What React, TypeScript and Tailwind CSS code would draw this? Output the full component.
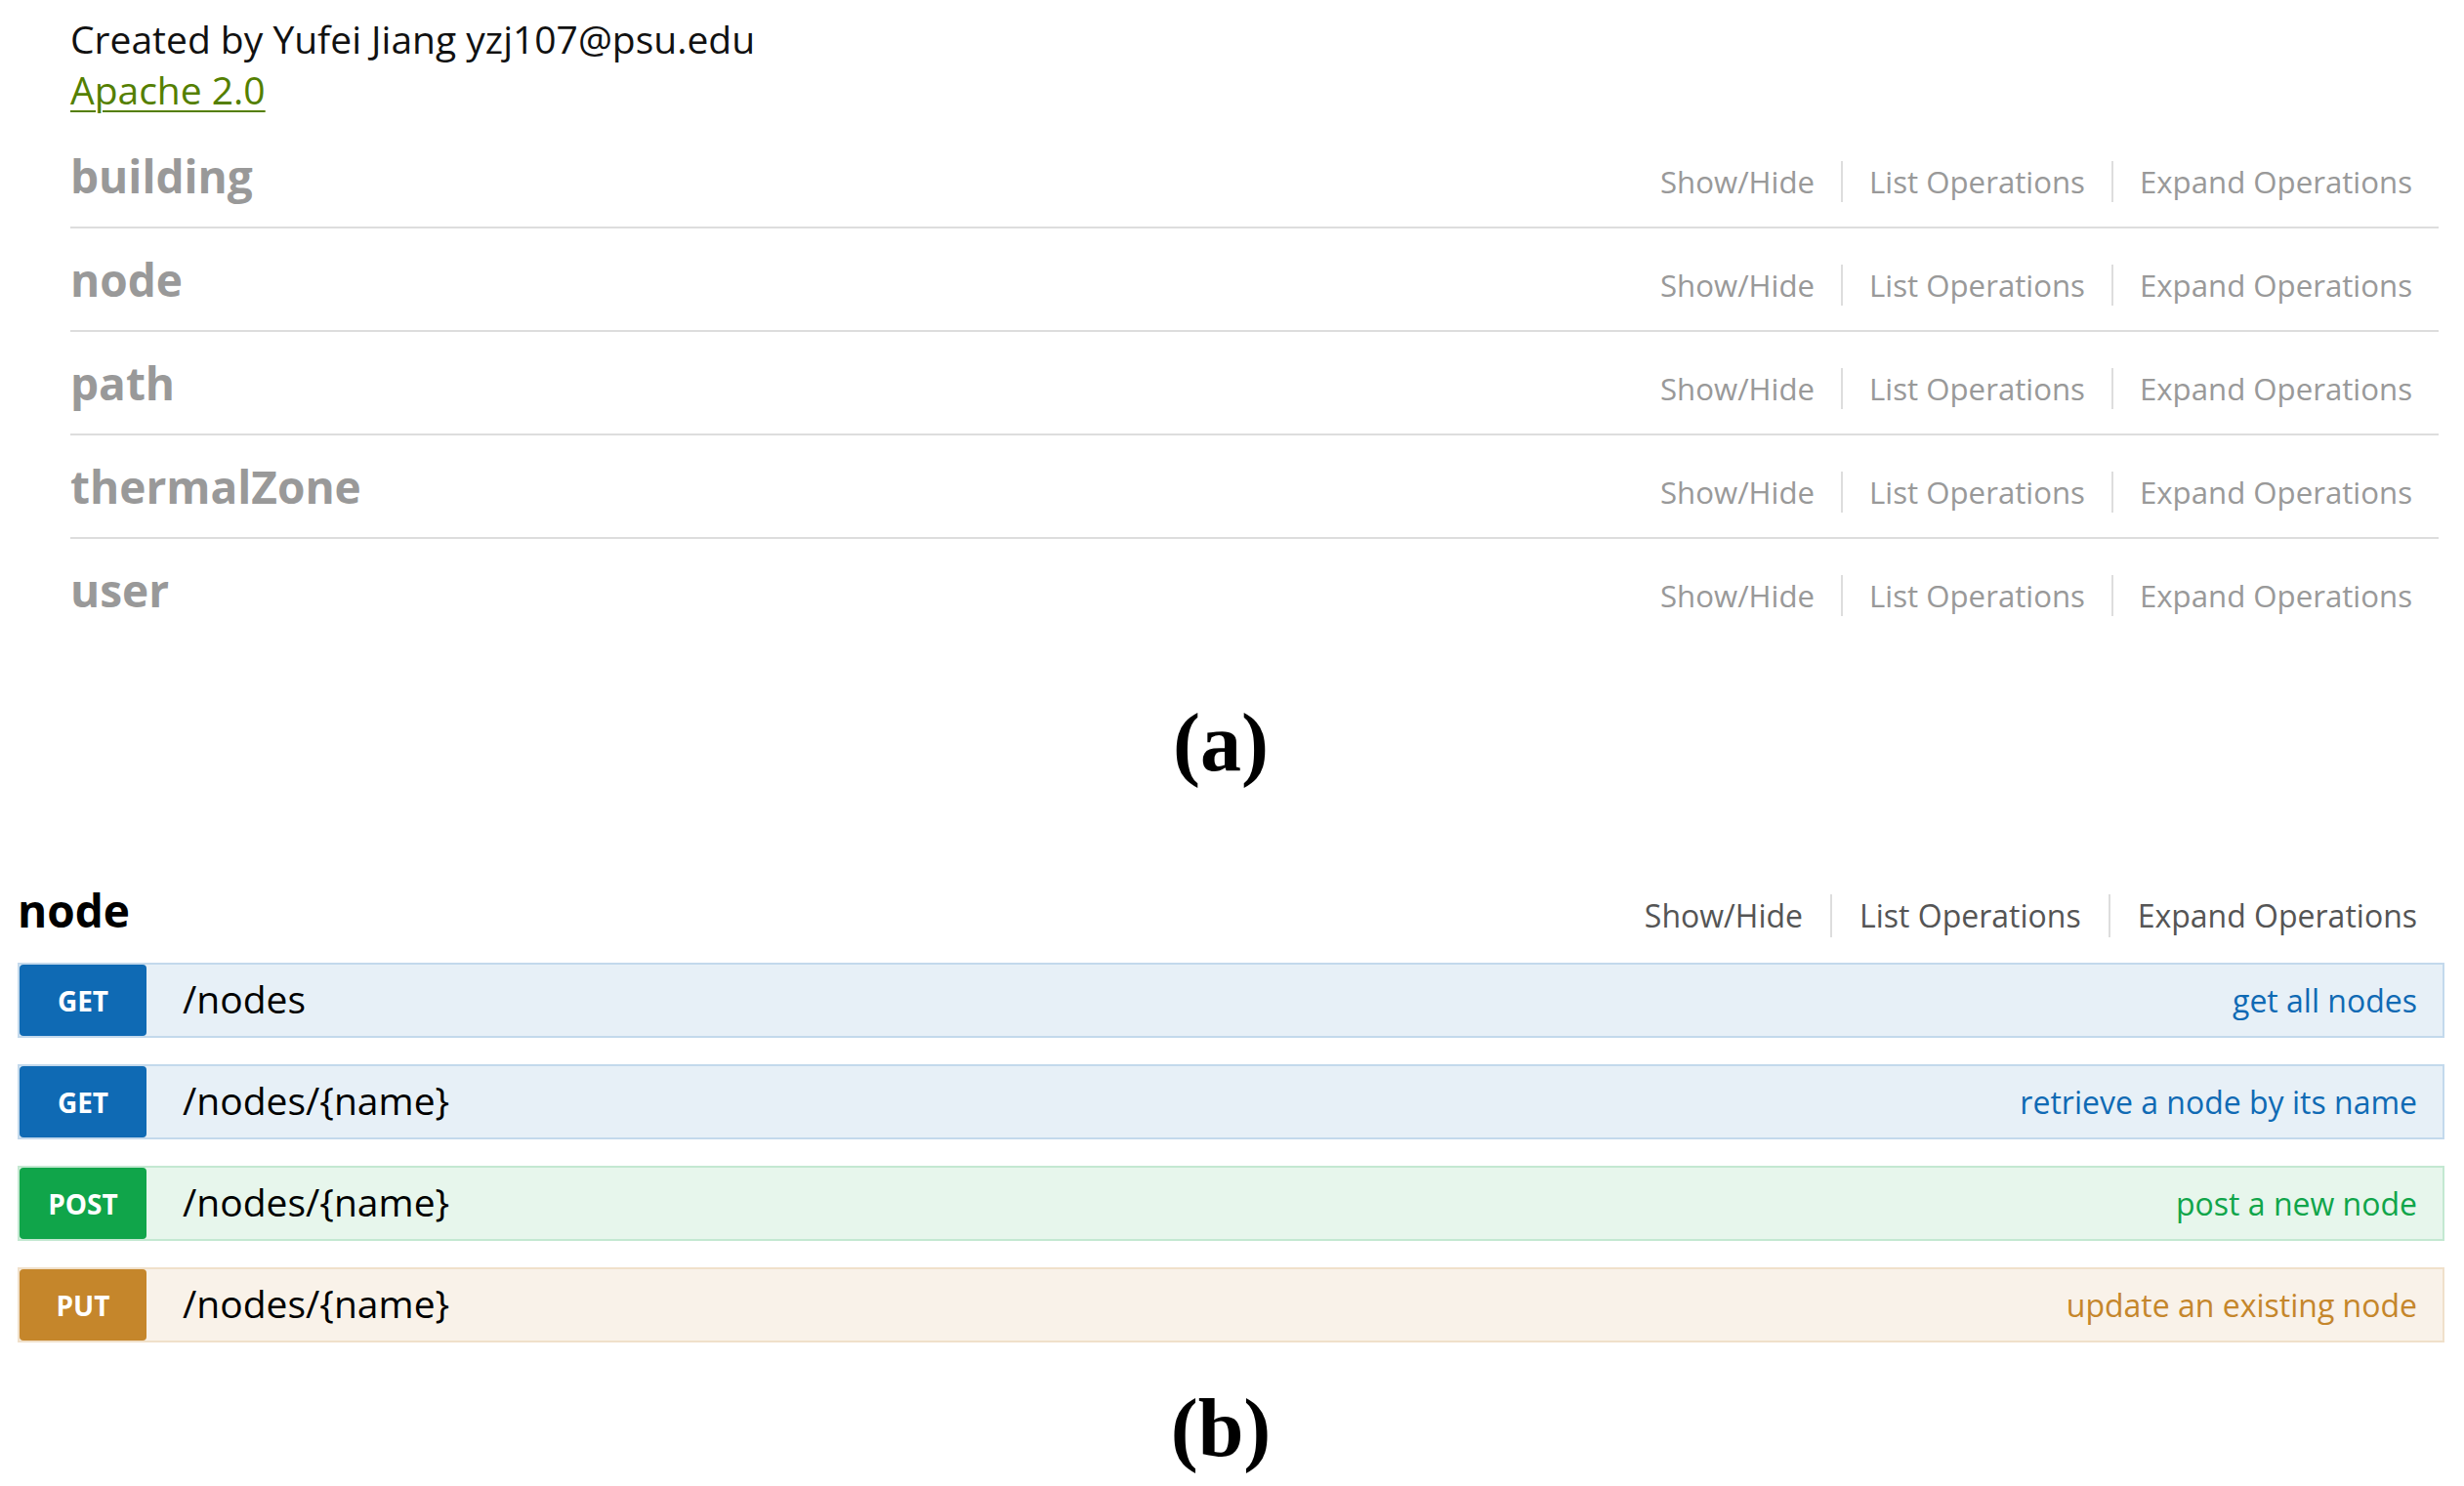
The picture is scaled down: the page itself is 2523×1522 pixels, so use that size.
import React from "react";

const tags = ["building", "node", "path", "thermalZone", "user"];

type Op = {
  method: string;
  path: string;
  desc: string;
  row: string;
  badge: string;
  text: string;
};

const ops: Op[] = [
  {
    method: "GET",
    path: "/nodes",
    desc: "get all nodes",
    row: "border-[#c3d9ec] bg-[#e7f0f7]",
    badge: "bg-[#0f6ab4]",
    text: "text-[#0f6ab4]",
  },
  {
    method: "GET",
    path: "/nodes/{name}",
    desc: "retrieve a node by its name",
    row: "border-[#c3d9ec] bg-[#e7f0f7]",
    badge: "bg-[#0f6ab4]",
    text: "text-[#0f6ab4]",
  },
  {
    method: "POST",
    path: "/nodes/{name}",
    desc: "post a new node",
    row: "border-[#c3e8d1] bg-[#e7f6ec]",
    badge: "bg-[#10a54a]",
    text: "text-[#10a54a]",
  },
  {
    method: "PUT",
    path: "/nodes/{name}",
    desc: "update an existing node",
    row: "border-[#f0e0ca] bg-[#f9f2e9]",
    badge: "bg-[#c5862b]",
    text: "text-[#c5862b]",
  },
];

export default function App() {
  return (
    <div className="min-h-screen w-full bg-white font-['Open_Sans',sans-serif]">
      {/* Section (a) */}
      <div className="pl-[72px] pr-[26px] pt-[14px]">
        <div className="text-[39px] leading-[52px] text-[#111111]">
          Created by Yufei Jiang yzj107@psu.edu
        </div>
        <div className="text-[39px] leading-[52px]">
          <a className="text-[#547f00] underline decoration-2 underline-offset-[6px]">
            Apache 2.0
          </a>
        </div>
        <div className="mt-[10px]">
          {tags.map((t, i) => (
            <div
              key={t}
              className={
                i < tags.length - 1
                  ? "flex h-[106px] items-baseline justify-between border-b-2 border-[#dddddd] pt-[29px]"
                  : "flex h-[106px] items-baseline justify-between pt-[29px]"
              }
            >
              <h2 className="text-[46px] font-bold leading-none text-[#999999]">{t}</h2>
              <div className="flex items-baseline text-[31.2px] leading-[42px] text-[#999999]">
                <span className="px-[27px]">Show/Hide</span>
                <span className="border-l-2 border-[#dddddd] px-[27px]">List Operations</span>
                <span className="border-l-2 border-[#dddddd] px-[27px]">Expand Operations</span>
              </div>
            </div>
          ))}
        </div>
      </div>

      <div className="mt-[61px] flex justify-center pr-[23px] font-['Liberation_Serif',serif] text-[84px] font-bold leading-none text-black">
        (a)
      </div>

      {/* Section (b) */}
      <div className="mt-[106px] pl-[18px] pr-[20px]">
        <div className="flex h-[51px] items-baseline justify-between">
          <h2 className="text-[46px] font-bold leading-none text-black">node</h2>
          <div className="flex items-baseline text-[32px] leading-[44px] text-[#555555]">
            <span className="px-[28px]">Show/Hide</span>
            <span className="border-l-2 border-[#dddddd] px-[28px]">List Operations</span>
            <span className="border-l-2 border-[#dddddd] px-[28px]">Expand Operations</span>
          </div>
        </div>
        <div className="mt-[26px] flex flex-col gap-[27px]">
          {ops.map((o, i) => (
            <div key={i} className={"flex h-[77px] items-stretch border-2 " + o.row}>
              <div
                className={
                  "flex w-[130px] shrink-0 items-center justify-center rounded-[4px] text-[28px] font-bold leading-none text-white " +
                  o.badge
                }
              >
                {o.method}
              </div>
              <div className="mb-[5px] ml-[37px] self-center text-[39px] leading-none text-black">
                {o.path}
              </div>
              <div className={"ml-auto self-center pr-[26px] text-[32px] leading-none " + o.text}>
                {o.desc}
              </div>
            </div>
          ))}
        </div>
      </div>

      <div className="mt-[46px] flex justify-center pr-[23px] font-['Liberation_Serif',serif] text-[84px] font-bold leading-none text-black">
        (b)
      </div>
    </div>
  );
}
